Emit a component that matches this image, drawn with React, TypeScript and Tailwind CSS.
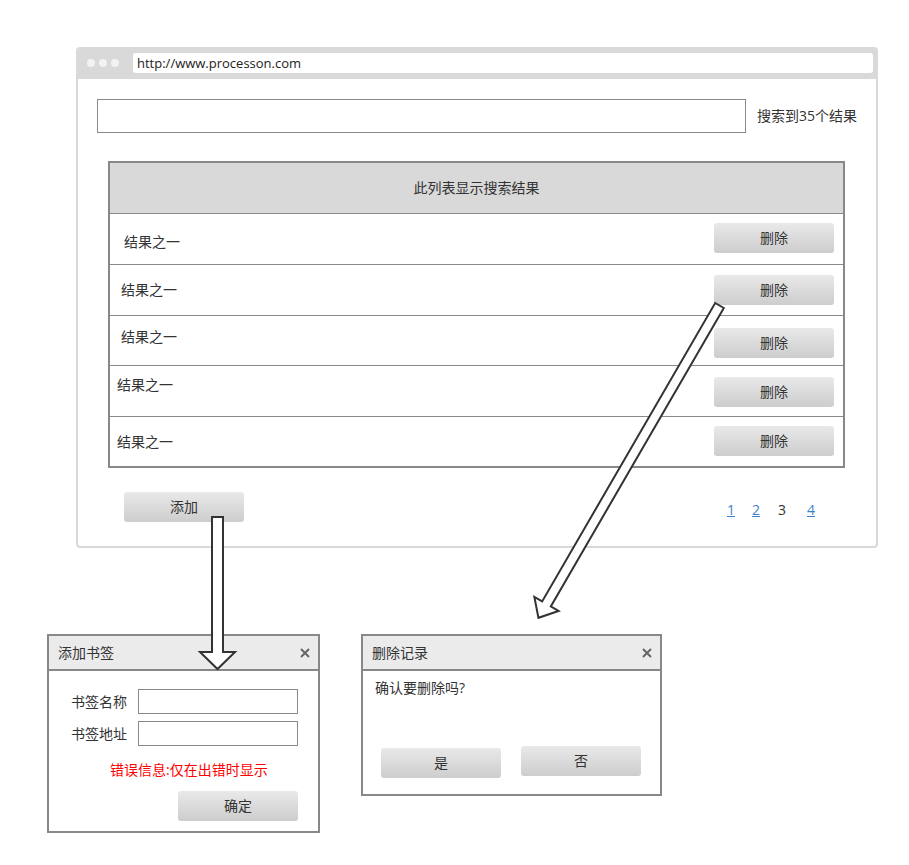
import React from 'react';

const GrayButton = ({ label, className = '' }: { label: string; className?: string }) => (
  <div
    className={`w-[120px] h-[30px] rounded-[3px] bg-linear-to-b from-[#e9e9e9] to-[#cdcdcd] flex items-center justify-center text-[14px] text-[#333] shrink-0 ${className}`}
  >
    {label}
  </div>
);

const CloseX = () => (
  <svg width="10" height="10" viewBox="0 0 10 10">
    <path d="M1 1 L9 9 M9 1 L1 9" stroke="#666" strokeWidth="2" />
  </svg>
);

// per-row offsets: row height / text left / text top / button top (wireframe is a bit uneven)
const rows = [
  { h: 'h-[51px]', pl: 'pl-[14px]', pt: 'pt-[18px]', bt: 'mt-[9px]' },
  { h: 'h-[51px]', pl: 'pl-[11px]', pt: 'pt-[15px]', bt: 'mt-[10px]' },
  { h: 'h-[50px]', pl: 'pl-[11px]', pt: 'pt-[11px]', bt: 'mt-[12px]' },
  { h: 'h-[51px]', pl: 'pl-[7px]', pt: 'pt-[9px]', bt: 'mt-[11px]' },
  { h: 'h-[49px]', pl: 'pl-[7px]', pt: 'pt-[15px]', bt: 'mt-[9px]' },
];

const App = () => {
  return (
    <div className="relative w-[909px] h-[865px] bg-white text-[14px] leading-[20px] text-[#333] font-['Open_Sans','Noto_Sans_CJK_SC',sans-serif]">
      {/* Browser window */}
      <div className="absolute left-[76px] top-[47px] w-[802px] h-[501px] border-2 border-[#d9d9d9] rounded-[4px] flex flex-col overflow-hidden">
        <div className="h-[30px] bg-[#d9d9d9] flex items-start pt-[4px] pl-[9px] pr-[3px] shrink-0">
          <div className="flex items-center gap-[4px] h-[20px]">
            <span className="w-[8px] h-[8px] rounded-full bg-[#f3f3f3]" />
            <span className="w-[8px] h-[8px] rounded-full bg-[#f3f3f3]" />
            <span className="w-[8px] h-[8px] rounded-full bg-[#f3f3f3]" />
          </div>
          <div className="ml-[14px] flex-1 h-[20px] bg-white rounded-[3px] pl-[4px] text-[13px] leading-[20px] text-[#222]">
            http://www.processon.com
          </div>
        </div>

        <div className="flex flex-col pt-[20px]">
          <div className="flex items-center ml-[19px]">
            <div className="w-[649px] h-[34px] border border-[#888]" />
            <span className="ml-[11px]">搜索到35个结果</span>
          </div>

          <div className="mt-[28px] ml-[30px] w-[737px] border-2 border-[#888] flex flex-col">
            <div className="h-[51px] bg-[#d9d9d9] border-b border-[#888] flex items-center justify-center">
              此列表显示搜索结果
            </div>
            {rows.map((r, i) => (
              <div
                key={i}
                className={`${r.h} flex justify-between items-start pr-[9px] ${i < rows.length - 1 ? 'border-b border-[#888]' : ''}`}
              >
                <span className={`${r.pl} ${r.pt}`}>结果之一</span>
                <GrayButton label="删除" className={r.bt} />
              </div>
            ))}
          </div>

          <div className="mt-[24px] flex items-start">
            <GrayButton label="添加" className="ml-[46px]" />
            <div className="ml-[483px] pt-[8px] flex">
              <span className="text-[#3f7fcf] underline">1</span>
              <span className="ml-[17px] text-[#3f7fcf] underline">2</span>
              <span className="ml-[18px]">3</span>
              <span className="ml-[21px] text-[#3f7fcf] underline">4</span>
            </div>
          </div>
        </div>
      </div>

      {/* Add bookmark dialog */}
      <div className="absolute left-[47px] top-[634px] w-[273px] h-[199px] border-2 border-[#888] flex flex-col">
        <div className="h-[35px] bg-[#ebebeb] border-b-2 border-[#888] flex items-center justify-between pl-[9px] pr-[8px] shrink-0">
          <span>添加书签</span>
          <CloseX />
        </div>
        <div className="flex flex-col pt-[18px]">
          <div className="flex items-center ml-[22px]">
            <span>书签名称</span>
            <div className="ml-[11px] w-[160px] h-[25px] border border-[#888]" />
          </div>
          <div className="flex items-center ml-[22px] mt-[7px]">
            <span>书签地址</span>
            <div className="ml-[11px] w-[160px] h-[25px] border border-[#888]" />
          </div>
          <div className="mt-[14px] ml-[61px] text-[#ff0000]">错误信息:仅在出错时显示</div>
          <GrayButton label="确定" className="mt-[11px] ml-[129px]" />
        </div>
      </div>

      {/* Delete dialog */}
      <div className="absolute left-[361px] top-[634px] w-[301px] h-[162px] border-2 border-[#888] flex flex-col">
        <div className="h-[35px] bg-[#ebebeb] border-b-2 border-[#888] flex items-center justify-between pl-[9px] pr-[8px] shrink-0">
          <span>删除记录</span>
          <CloseX />
        </div>
        <div className="flex flex-col pt-[7px]">
          <div className="ml-[12px]">确认要删除吗?</div>
          <div className="mt-[48px] ml-[18px] flex items-start gap-[20px]">
            <GrayButton label="是" className="mt-[2px]" />
            <GrayButton label="否" />
          </div>
        </div>
      </div>

      {/* Arrows */}
      <svg className="absolute left-0 top-0 pointer-events-none" width="909" height="865">
        <polygon
          points="212,517 223,517 223,652 235,652 217.5,669 200,652 212,652"
          fill="white"
          stroke="#333"
          strokeWidth="2"
          strokeLinejoin="miter"
        />
        <g transform="translate(719.5 305.5) rotate(120.1)">
          <polygon
            points="0,-5 345,-5 345,-14 361,0 345,14 345,5 0,5"
            fill="white"
            stroke="#333"
            strokeWidth="2"
          />
        </g>
      </svg>
    </div>
  );
};

export default App;
